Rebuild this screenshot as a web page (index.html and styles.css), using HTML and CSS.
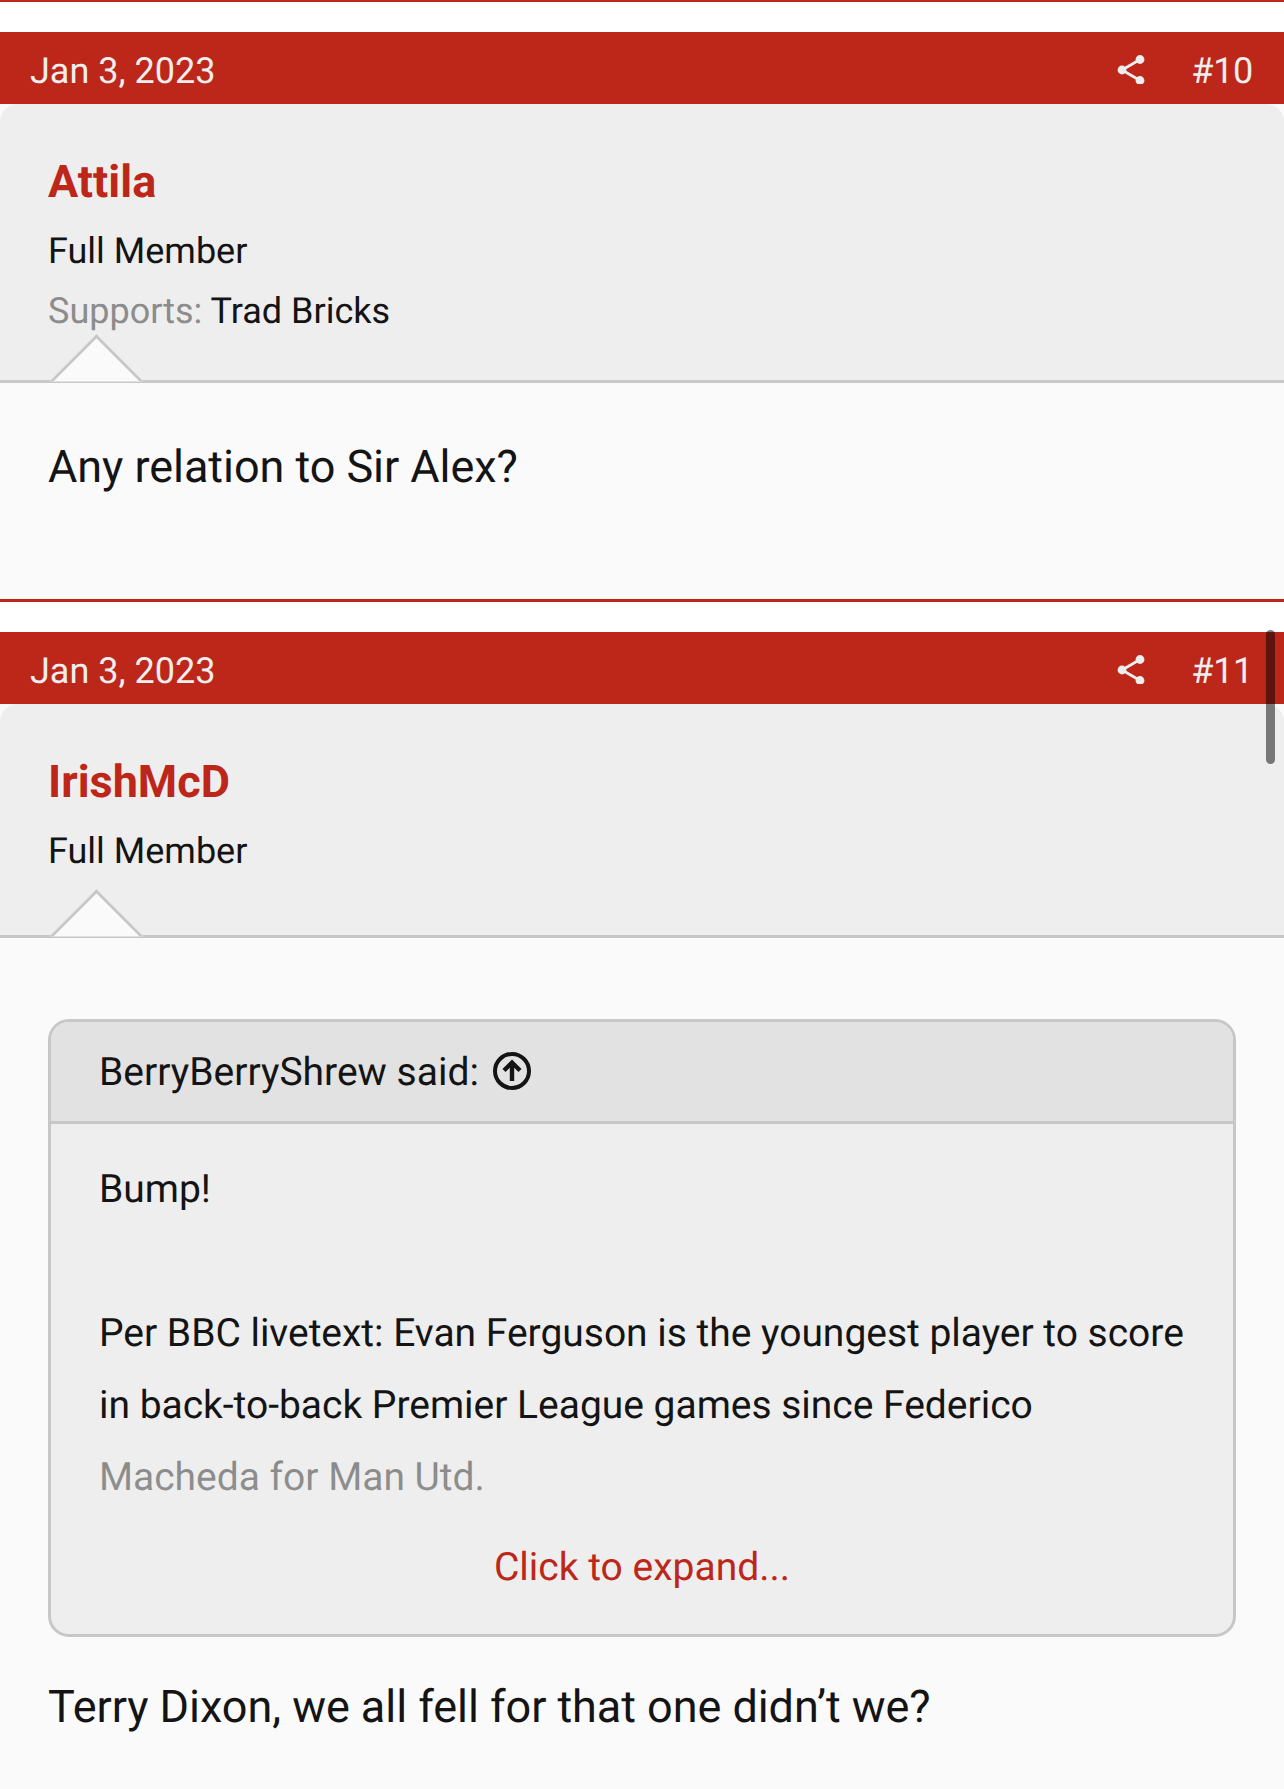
FILE: index.html
```html
<!DOCTYPE html>
<html lang="en">
<head>
<meta charset="utf-8">
<title>Thread</title>
<link rel="stylesheet" href="styles.css">
</head>
<body>
<div class="rule rule-top"></div>
<article class="post">
  <header class="post-bar">
    <span class="post-date">Jan 3, 2023</span>
    <span class="post-tools">
      <svg class="share" viewBox="0 0 30 30"><path d="M23 5.500 5 16 23 26.500" fill="none" stroke="currentColor" stroke-width="2.800"/><circle cx="23" cy="5.500" r="4.400" fill="currentColor"/><circle cx="5" cy="16" r="4.400" fill="currentColor"/><circle cx="23" cy="26.500" r="4.400" fill="currentColor"/></svg>
      <span class="post-num">#10</span>
    </span>
  </header>
  <div class="post-body">
    <section class="user user-extra">
      <h4 class="user-name">Attila</h4>
      <div class="user-line">Full Member</div>
      <div class="user-line"><span class="muted">Supports:</span> Trad Bricks</div>
    </section>
    <div class="message message-short">
      <p class="message-text">Any relation to Sir Alex?</p>
    </div>
  </div>
</article>
<div class="rule"></div>
<article class="post">
  <header class="post-bar">
    <span class="post-date">Jan 3, 2023</span>
    <span class="post-tools">
      <svg class="share" viewBox="0 0 30 30"><path d="M23 5.500 5 16 23 26.500" fill="none" stroke="currentColor" stroke-width="2.800"/><circle cx="23" cy="5.500" r="4.400" fill="currentColor"/><circle cx="5" cy="16" r="4.400" fill="currentColor"/><circle cx="23" cy="26.500" r="4.400" fill="currentColor"/></svg>
      <span class="post-num">#11</span>
    </span>
  </header>
  <div class="post-body">
    <section class="user">
      <h4 class="user-name">IrishMcD</h4>
      <div class="user-line">Full Member</div>
    </section>
    <div class="message message-tall">
      <blockquote class="quote">
        <div class="quote-head">BerryBerryShrew said:
          <svg class="quote-up" viewBox="0 0 38 38"><circle cx="19" cy="19" r="17" fill="none" stroke="currentColor" stroke-width="4"/><path d="M19 29V11M11 18.500 19 10.500 27 18.500" fill="none" stroke="currentColor" stroke-width="4.400"/></svg>
        </div>
        <div class="quote-body">
          <div class="quote-clip">
            <p class="quote-line">Bump!</p>
            <p class="quote-line">&nbsp;</p>
            <p class="quote-line">Per BBC livetext: Evan Ferguson is the youngest player to score in back-to-back Premier League games since Federico Macheda for Man Utd.</p>
          </div>
          <div class="quote-expand">Click to expand...</div>
        </div>
      </blockquote>
      <p class="message-text">Terry Dixon, we all fell for that one didn’t we?</p>
    </div>
  </div>
</article>
<div class="scroll-thumb"></div>
</body>
</html>
```
FILE: styles.css
```css
* { box-sizing: border-box; }
html, body { margin: 0; padding: 0; }
body { background: #fff; color: #141414; font-family: Roboto, "Noto Sans", sans-serif; height: 1789px; overflow: hidden; position: relative; text-rendering: geometricPrecision; }
.rule { height: 3px; background: #bc271a; }
.rule-top { height: 2px; }
.post { padding-top: 30px; }
.post-bar { height: 72px; background: #bc271a; color: #eeeeee; display: flex; justify-content: space-between; align-items: center; padding: 6px 31px 0 30px; font-size: 36px; }
.post-tools { display: flex; align-items: center; gap: 44px; }
.post-num { letter-spacing: -0.3px; }
.share { width: 30px; height: 30px; display: block; margin-top: -5px; }
.post-body { background: #fafafa; }
.user { background: #eee; border-top-left-radius: 18px; border-top-right-radius: 18px; border-bottom: 3px solid #c7c7c7; padding: 42px 48px 54px; position: relative; }
.user-extra { padding-bottom: 39px; }
.user::after { content: ""; position: absolute; left: 63px; bottom: -35px; width: 64px; height: 64px; background: #fafafa; border-left: 3px solid #c7c7c7; border-top: 3px solid #c7c7c7; transform: rotate(45deg); clip-path: polygon(0 0, 100% 0, 0 100%); }
.user-name { margin: 0 0 3px; font-size: 45px; line-height: 72px; font-weight: 700; color: #bc271a; }
.user-line { font-size: 36px; line-height: 60px; }
.muted { color: #8c8c8c; }
.message { padding: 48px 48px 0; }
.message-short { height: 216px; }
.message-tall { padding-top: 81px; min-height: 851px; }
.message-text { margin: 0; font-size: 45px; line-height: 72px; letter-spacing: -0.05px; }
.quote { margin: 0 0 34px; border: 3px solid #c7c7c7; border-radius: 21px; background: #eee; overflow: hidden; }
.quote-head { background: #e2e2e2; border-bottom: 3px solid #c7c7c7; height: 102px; padding: 0 48px; display: flex; align-items: center; gap: 14px; font-size: 39px; }
.quote-up { width: 38px; height: 38px; display: block; margin-top: -2px; }
.quote-body { padding: 29px 40px 0 48px; }
.quote-clip { height: 360px; overflow: hidden; position: relative; }
.quote-clip::after { content: ""; position: absolute; left: 0; right: 0; bottom: 0; height: 72px; background: linear-gradient(rgba(238,238,238,.52), rgba(238,238,238,.58)); }
.quote-line { margin: 0; font-size: 39px; line-height: 72px; letter-spacing: -0.02px; }
.quote-expand { text-align: center; color: #bc271a; font-size: 39px; line-height: 72px; margin: 18px 8px 0 0; padding-bottom: 31px; }
.scroll-thumb { position: absolute; left: 1266px; top: 630px; width: 9px; height: 134px; border-radius: 5px; background: rgba(0,0,0,.5); }
```
